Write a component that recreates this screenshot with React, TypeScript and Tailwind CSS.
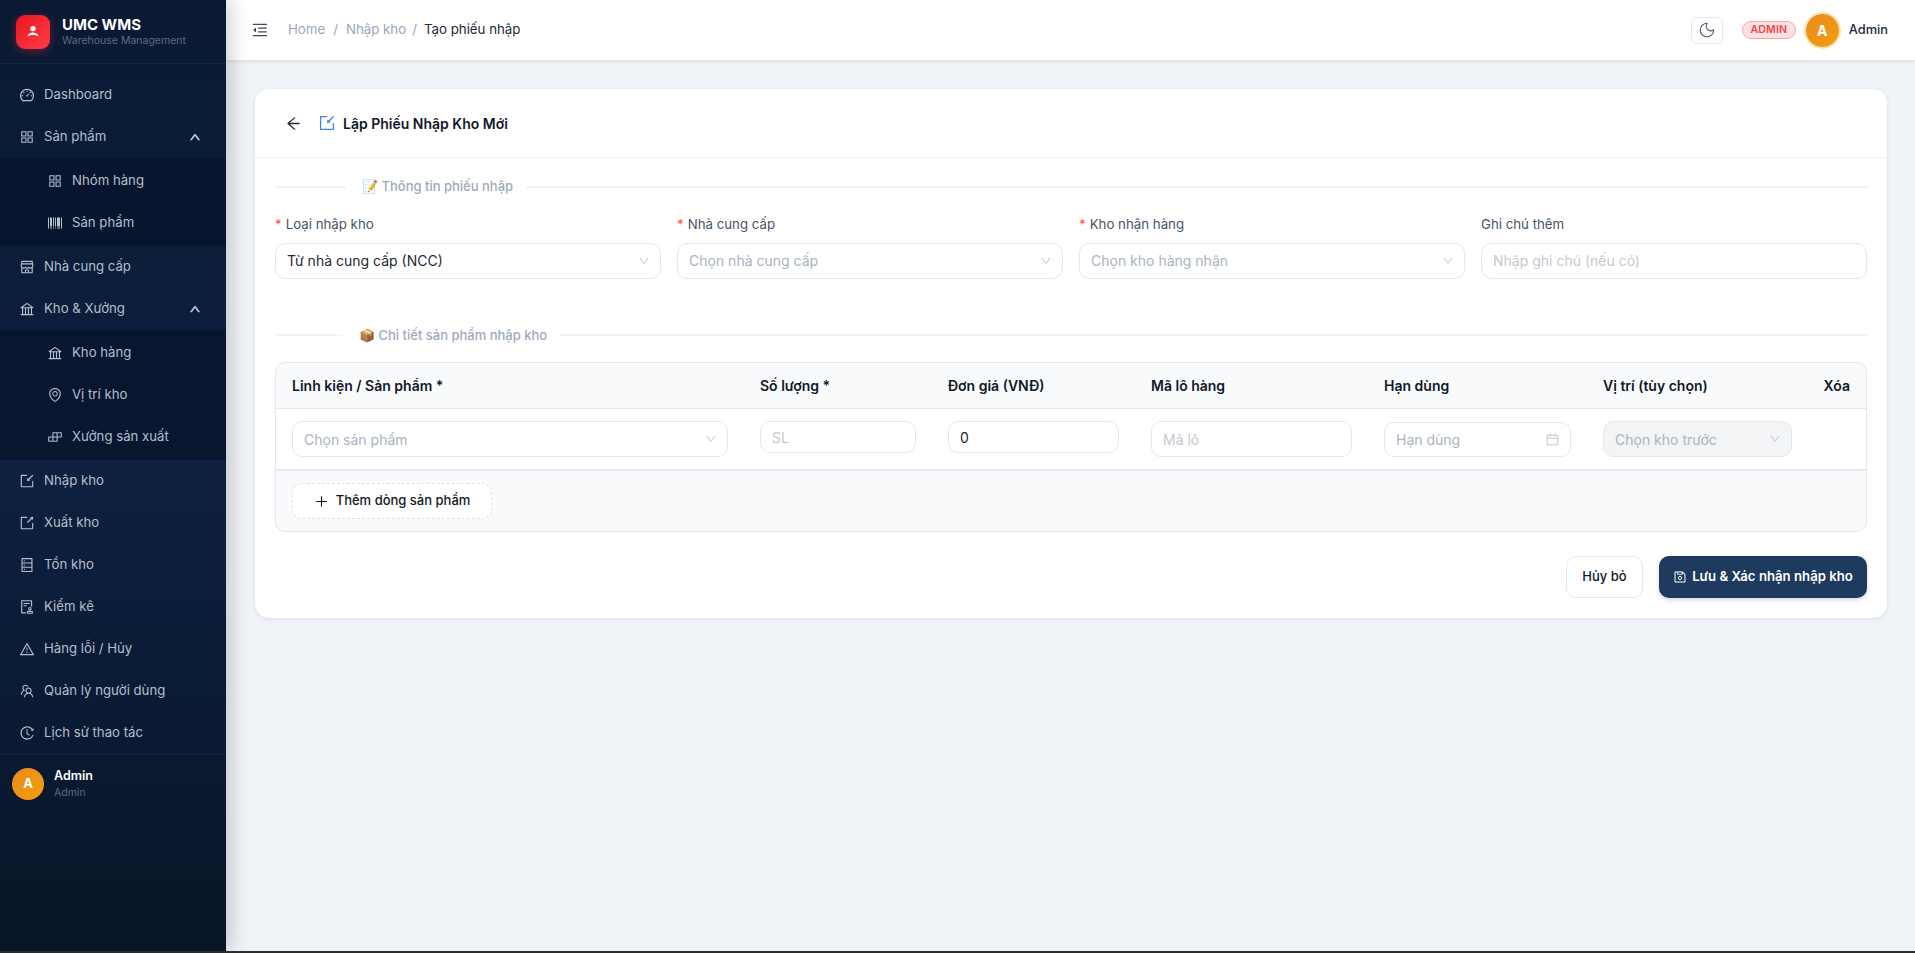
import React from "react";
import { Moon } from "lucide-react";
import {
  AiOutlineDashboard, AiOutlineAppstore, AiOutlineUp, AiOutlineBarcode, AiOutlineShop, AiOutlineBank,
  AiOutlineEnvironment, AiOutlineBuild, AiOutlineImport, AiOutlineExport, AiOutlineDatabase, AiOutlineAudit,
  AiOutlineWarning, AiOutlineTeam, AiOutlineHistory, AiOutlineMenuFold, AiOutlineArrowLeft,
  AiOutlineDown, AiOutlineCalendar, AiOutlinePlus, AiOutlineSave,
} from "react-icons/ai";

type IconT = React.ComponentType<{ className?: string }>;

function Item({ icon: Icon, label, arrow }: { icon: IconT; label: string; arrow?: boolean }) {
  return (
    <div className="flex h-[42px] items-center pl-[19px] pr-[25px] text-[13.2px] text-[#b6bfcc]">
      <Icon className="mr-[9px] size-4 shrink-0" />
      <span className="flex-1">{label}</span>
      {arrow && <AiOutlineUp className="size-[12px] text-[#c4cbd6] [stroke-width:70]" />}
    </div>
  );
}

function Sub({ icon: Icon, label }: { icon: IconT; label: string }) {
  return (
    <div className="flex h-[42px] items-center pl-[47px] text-[13.2px] text-[#b6bfcc]">
      <Icon className="mr-[9px] size-4 shrink-0" />
      <span>{label}</span>
    </div>
  );
}

function Group({ children }: { children: React.ReactNode }) {
  return <div className="bg-[#07132b]/70 py-[2px]">{children}</div>;
}

function LogoMark() {
  return (
    <svg viewBox="0 0 16 16" className="size-4" fill="white">
      <circle cx="8" cy="4.6" r="2.7" />
      <path d="M2.4 12.6C3.4 9.6 5.4 8.6 8 8.6s4.6 1 5.6 4c-1.6-1-3.4-1.5-5.6-1.5s-4 .5-5.6 1.5z" />
    </svg>
  );
}

function Sidebar() {
  return (
    <aside className="relative z-10 flex w-[226px] shrink-0 flex-col bg-gradient-to-b from-[#0a1a33] via-[#0d2040] to-[#081527] shadow-[4px_0_20px_rgba(0,0,0,0.2)]">
      <div className="flex h-[64px] items-center border-b border-white/5 pl-4">
        <div className="flex size-[34px] items-center justify-center rounded-[9px] bg-gradient-to-br from-[#e8111f] to-[#ff3b47] shadow-[0_2px_8px_rgba(239,35,50,0.4)]">
          <LogoMark />
        </div>
        <div className="ml-3 mt-px">
          <div className="text-[15px] font-bold leading-[18px] text-white">UMC WMS</div>
          <div className="text-[10.5px] leading-[14px] text-[#5f6b7d]">Warehouse Management</div>
        </div>
      </div>
      <nav className="pt-[10px]">
        <Item icon={AiOutlineDashboard} label="Dashboard" />
        <Item icon={AiOutlineAppstore} label="Sản phẩm" arrow />
        <Group>
          <Sub icon={AiOutlineAppstore} label="Nhóm hàng" />
          <Sub icon={AiOutlineBarcode} label="Sản phẩm" />
        </Group>
        <Item icon={AiOutlineShop} label="Nhà cung cấp" />
        <Item icon={AiOutlineBank} label="Kho & Xưởng" arrow />
        <Group>
          <Sub icon={AiOutlineBank} label="Kho hàng" />
          <Sub icon={AiOutlineEnvironment} label="Vị trí kho" />
          <Sub icon={AiOutlineBuild} label="Xưởng sản xuất" />
        </Group>
        <Item icon={AiOutlineImport} label="Nhập kho" />
        <Item icon={AiOutlineExport} label="Xuất kho" />
        <Item icon={AiOutlineDatabase} label="Tồn kho" />
        <Item icon={AiOutlineAudit} label="Kiểm kê" />
        <Item icon={AiOutlineWarning} label="Hàng lỗi / Hủy" />
        <Item icon={AiOutlineTeam} label="Quản lý người dùng" />
        <Item icon={AiOutlineHistory} label="Lịch sử thao tác" />
      </nav>
      <div className="flex items-center border-t border-white/5 pl-3 pt-[13px]">
        <div className="flex size-8 items-center justify-center rounded-full bg-gradient-to-br from-[#e88a1c] to-[#f59e0b] text-[13px] font-bold text-white">A</div>
        <div className="ml-[10px]">
          <div className="text-[12.5px] font-semibold leading-[16px] text-white">Admin</div>
          <div className="mt-[2px] text-[10.5px] leading-[14px] text-[#5f6b7d]">Admin</div>
        </div>
      </div>
    </aside>
  );
}

function Topbar() {
  return (
    <header className="flex h-[60px] shrink-0 items-center bg-white pl-[25px] pr-[27px] shadow-[0_1px_4px_rgba(0,0,0,0.12)]">
      <AiOutlineMenuFold className="size-[18px] text-[#3f4a5a]" />
      <div className="ml-[19px] flex items-center text-[13.28px] text-[#9aa6b8]">
        <span>Home</span>
        <span className="mx-2">/</span>
        <span>Nhập kho</span>
        <span className="ml-[6px] mr-[7px]">/</span>
        <span className="text-[#1f2937]">Tạo phiếu nhập</span>
      </div>
      <div className="ml-auto flex items-center">
        <div className="flex h-[27px] w-[32px] items-center justify-center rounded-md border border-[#e2e8f0]">
          <Moon className="size-[18px] text-[#475569]" strokeWidth={1.4} />
        </div>
        <div className="ml-[19px] flex h-[18px] w-[54px] items-center justify-center rounded-full border border-[#fca5a5] bg-[#fee2e2] text-[10.5px] font-semibold tracking-[0.2px] text-[#ef4444]">ADMIN</div>
        <div className="ml-[10px] flex size-[33px] items-center justify-center rounded-full bg-gradient-to-br from-[#e88a1c] to-[#f59e0b] text-[14px] font-bold text-white ring-[2px] ring-[#fbe2b5]">A</div>
        <span className="ml-[10px] text-[12.8px] font-medium text-[#1f2937]">Admin</span>
      </div>
    </header>
  );
}

function Divider({ children, left }: { children: React.ReactNode; left: string }) {
  return (
    <div className="flex items-center">
      <div className={`h-[2px] bg-[#f0f3f8] ${left}`} />
      <div className="ml-4 mr-[13px] whitespace-nowrap text-[13px] font-medium text-[#9ea9bc]">{children}</div>
      <div className="h-[2px] flex-1 bg-[#f0f3f8]" />
    </div>
  );
}

function Box({ text, tone = "value", icon, disabled, className }: { text: string; tone?: "value" | "ph" | "light"; icon?: "down" | "cal"; disabled?: boolean; className?: string }) {
  const color = tone === "value" ? "text-[#1f2937]" : tone === "ph" ? "text-[#a9b3c4]" : "text-[#c4c8cf]";
  return (
    <div className={`flex items-center justify-between rounded-[10px] border border-[#e2e8f0] pl-[11px] pr-[10px] text-[14px] ${disabled ? "bg-[#f3f4f6]" : "bg-white"} ${color} ${className ?? ""}`}>
      <span className="truncate">{text}</span>
      {icon === "down" && <AiOutlineDown className="size-[12px] text-[#c3c9d3]" />}
      {icon === "cal" && <AiOutlineCalendar className="size-[15px] text-[#c3c9d3]" />}
    </div>
  );
}

function Field({ label, req, children }: { label: string; req?: boolean; children: React.ReactNode }) {
  return (
    <div>
      <div className="mb-2 flex h-[20px] items-center text-[13.28px] text-[#475569]">
        {req && <span className="mr-1 text-[#ff4d4f]">*</span>}
        {label}
      </div>
      {children}
    </div>
  );
}

const cols = "grid grid-cols-[468px_188px_203px_233px_219px_221px_1fr]";

function Card() {
  return (
    <section className="rounded-[14px] bg-white shadow-[0_1px_4px_rgba(15,23,42,0.1)]">
      <div className="flex h-[69px] items-center border-b border-[#f1f4f8] pl-[30px]">
        <AiOutlineArrowLeft className="size-[17px] text-[#1f2937]" />
        <AiOutlineImport className="ml-4 size-[18px] text-[#3b82f6]" />
        <h1 className="ml-[7px] mt-px text-[14px] font-semibold text-[#111827]">Lập Phiếu Nhập Kho Mới</h1>
      </div>
      <div className="px-5 pb-5 pt-[19px]">
        <Divider left="w-[71px]">📝 Thông tin phiếu nhập</Divider>
        <div className="mt-[18px] grid grid-cols-4 gap-4">
          <Field label="Loại nhập kho" req><Box text="Từ nhà cung cấp (NCC)" icon="down" className="h-9" /></Field>
          <Field label="Nhà cung cấp" req><Box text="Chọn nhà cung cấp" tone="ph" icon="down" className="h-9" /></Field>
          <Field label="Kho nhận hàng" req><Box text="Chọn kho hàng nhận" tone="ph" icon="down" className="h-9" /></Field>
          <Field label="Ghi chú thêm"><Box text="Nhập ghi chú (nếu có)" tone="light" className="h-9" /></Field>
        </div>
        <div className="mt-[47px]">
          <Divider left="w-[68px]">📦 Chi tiết sản phẩm nhập kho</Divider>
        </div>
        <div className="mt-[17px] overflow-hidden rounded-[10px] border border-[#e2e8f0] bg-[#f8fafc]">
          <div className={`${cols} h-[46px] items-center border-b border-[#e2e8f0] text-[14px] font-semibold text-[#111827]`}>
            <div className="px-4">Linh kiện / Sản phẩm *</div>
            <div className="px-4">Số lượng *</div>
            <div className="px-4">Đơn giá (VNĐ)</div>
            <div className="px-4">Mã lô hàng</div>
            <div className="px-4">Hạn dùng</div>
            <div className="px-4">Vị trí (tùy chọn)</div>
            <div className="pr-4 text-right">Xóa</div>
          </div>
          <div className={`${cols} h-[62px] items-center border-b-2 border-[#e2e8f0] bg-white`}>
            <div className="px-4"><Box text="Chọn sản phẩm" tone="ph" icon="down" className="h-9" /></div>
            <div className="px-4"><Box text="SL" tone="light" className="mb-[4px] h-8" /></div>
            <div className="px-4"><Box text="0" className="mb-[4px] h-8" /></div>
            <div className="px-4"><Box text="Mã lô" tone="light" className="h-9" /></div>
            <div className="px-4"><Box text="Hạn dùng" tone="ph" icon="cal" className="h-[35px]" /></div>
            <div className="px-4"><Box text="Chọn kho trước" tone="ph" icon="down" disabled className="h-9" /></div>
            <div />
          </div>
          <div className="flex h-[60px] items-center px-4">
            <div className="flex h-9 w-[200px] items-center justify-center rounded-[10px] border border-dashed border-[#dde3ec] bg-white text-[13px] font-medium text-[#111827]">
              <AiOutlinePlus className="mr-[7px] size-[15px]" />
              Thêm dòng sản phẩm
            </div>
          </div>
        </div>
        <div className="mt-6 flex justify-end gap-4">
          <div className="flex h-[42px] w-[77px] items-center justify-center rounded-[10px] border border-[#e2e8f0] bg-white text-[13px] font-medium text-[#111827]">Hủy bỏ</div>
          <div className="flex h-[42px] w-[208px] items-center justify-center rounded-[10px] bg-[#1e3a5f] text-[13.2px] font-semibold text-white shadow-[0_2px_4px_rgba(30,58,95,0.2)]">
            <AiOutlineSave className="mr-[5px] size-[14px]" />
            Lưu &amp; Xác nhận nhập kho
          </div>
        </div>
      </div>
    </section>
  );
}

export default function App() {
  return (
    <div className="h-[953px] overflow-hidden bg-[#2b2c2e] font-['Inter',sans-serif]">
      <div className="flex h-[951px] overflow-hidden bg-[#f0f3f8]">
        <Sidebar />
        <main className="flex min-w-0 flex-1 flex-col">
          <Topbar />
          <div className="pl-[29px] pr-[28px] pt-[29px]"><Card /></div>
        </main>
      </div>
    </div>
  );
}
